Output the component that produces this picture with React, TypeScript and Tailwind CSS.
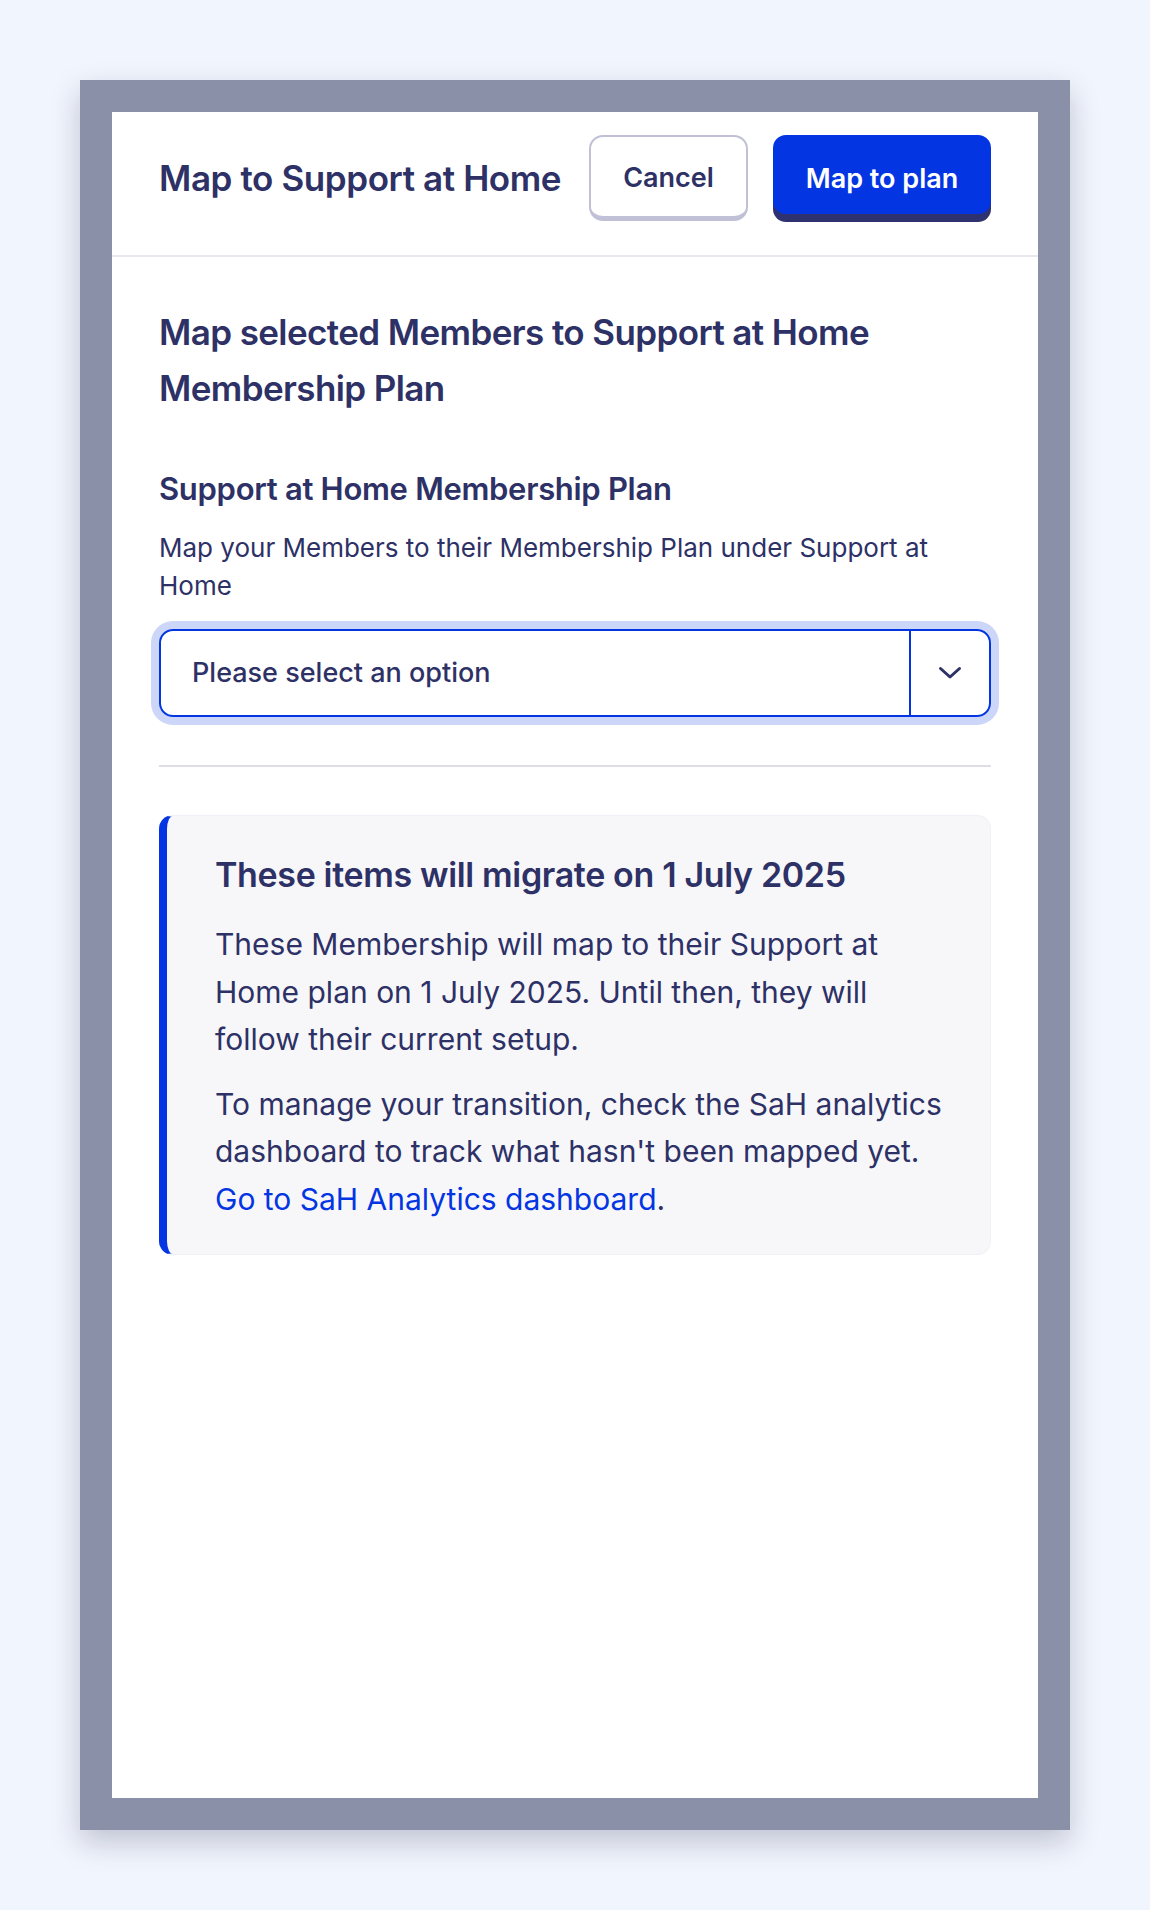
import { useState } from "react";

export default function App() {
  const [plan, setPlan] = useState("");

  return (
    <div className="h-[1910px] bg-[#f1f5fd] p-[80px] font-['Inter',sans-serif] text-[#2d3166]">
      {/* Grey backdrop around the sheet */}
      <div className="h-full bg-[#8b90a9] p-8 shadow-[0_12px_28px_rgba(20,24,60,0.22)]">
        <div className="flex h-full flex-col bg-white">
          {/* Header */}
          <div className="flex h-[145px] items-start justify-between border-b-2 border-[#e8e8ef] px-[47px] pt-[23px]">
            <h1 className="text-[35px] font-semibold leading-[87px] tracking-[-0.4px]">
              Map to Support at Home
            </h1>
            <div className="flex items-start gap-[25px]">
              <button className="h-[86px] w-[159px] rounded-[14px] border-2 border-b-[5px] border-[#c0c1d6] bg-white pt-[4px] text-[27px] font-semibold text-[#2d3166]">
                Cancel
              </button>
              <button className="h-[79px] w-[218px] rounded-[13px] bg-[#0335e3] pt-[10px] text-[27px] font-semibold text-white shadow-[0_8px_0_#2f3270]">
                Map to plan
              </button>
            </div>
          </div>

          {/* Body */}
          <div className="px-[47px] pt-[47px]">
            <h2 className="text-[35px] font-semibold leading-[56px] tracking-[-0.6px]">
              Map selected Members to Support at Home Membership Plan
            </h2>

            <h3 className="mt-[51px] text-[31px] font-semibold leading-[44px] tracking-[-0.3px]">
              Support at Home Membership Plan
            </h3>
            <p className="mt-[18px] text-[26px] leading-[38px]">
              Map your Members to their Membership Plan under Support at Home
            </p>

            {/* Select */}
            <div className="mt-[24px] flex h-[88px] rounded-[14px] border-2 border-[#0335e3] shadow-[0_0_0_8px_#ccd6f8]">
              <div className="flex flex-1 items-center pl-[31px] text-[27px] font-medium">
                {plan || "Please select an option"}
              </div>
              <button
                onClick={() => setPlan("")}
                className="flex w-[80px] items-center justify-center border-l-2 border-[#0335e3]"
              >
                <svg width="24" height="14" viewBox="0 0 24 14" fill="none">
                  <path
                    d="M2.5 2.5 L12 11 L21.5 2.5"
                    stroke="#2d3166"
                    strokeWidth="3"
                    strokeLinecap="round"
                    strokeLinejoin="round"
                  />
                </svg>
              </button>
            </div>

            <div className="mt-[48px] h-[2px] bg-[#dedee6]" />

            {/* Migration notice */}
            <div className="mt-[48px] rounded-[14px] border border-l-8 border-[#eff0f8] border-l-[#0335e3] bg-[#f7f7fa] pb-[31px] pl-[48px] pt-[35px]">
              <h4 className="text-[34px] font-semibold leading-[48px] tracking-[-0.35px]">
                These items will migrate on 1 July 2025
              </h4>
              <p className="mt-[22px] max-w-[733px] text-[30px] leading-[47.5px]">
                These Membership will map to their Support at Home plan on 1 July 2025. Until then, they will follow their current setup.
              </p>
              <p className="mt-[17px] max-w-[733px] text-[30px] leading-[47.5px]">
                To manage your transition, check the SaH analytics dashboard to track what hasn't been mapped yet.{" "}
                <a href="#" className="text-[#0335e3]">
                  Go to SaH Analytics dashboard
                </a>
                .
              </p>
            </div>
          </div>
        </div>
      </div>
    </div>
  );
}
